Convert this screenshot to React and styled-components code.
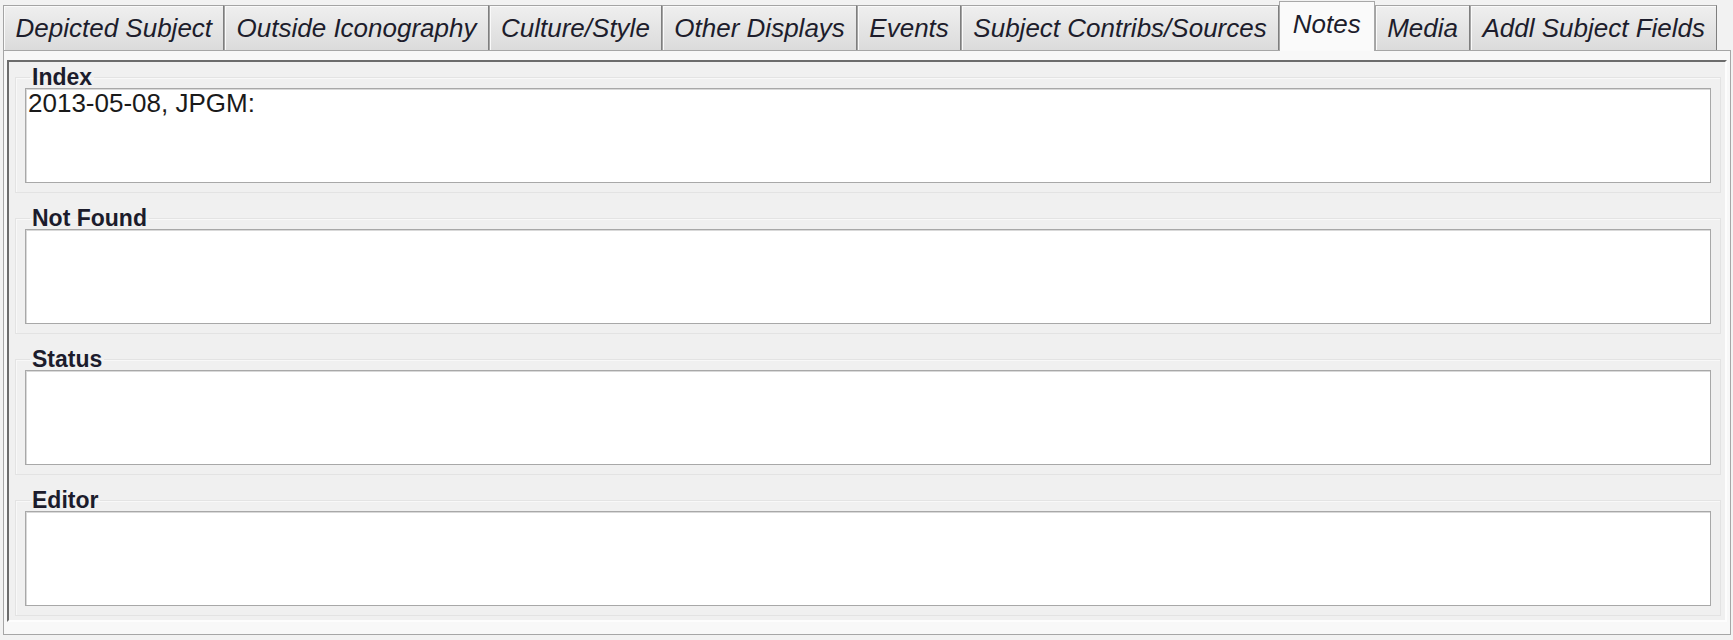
import React from 'react';
import styled, { createGlobalStyle } from 'styled-components';

const GlobalStyle = createGlobalStyle`
  html, body {
    margin: 0;
    padding: 0;
    background: #f2f2f2;
  }
  body {
    font-family: "Liberation Sans", Arial, sans-serif;
  }
`;

const tabs = [
  'Depicted Subject',
  'Outside Iconography',
  'Culture/Style',
  'Other Displays',
  'Events',
  'Subject Contribs/Sources',
  'Notes',
  'Media',
  'Addl Subject Fields',
];

const fields = [
  { label: 'Index', value: '2013-05-08, JPGM:' },
  { label: 'Not Found', value: '' },
  { label: 'Status', value: '' },
  { label: 'Editor', value: '' },
];

const App = () => {
  return (
    <>
      <GlobalStyle />
      <Window>
        <TabBar>
          {tabs.map((t) => (
            <Tab key={t} $active={t === 'Notes'}>{t}</Tab>
          ))}
        </TabBar>
        <Panel>
          <Inner>
            {fields.map((f) => (
              <Group key={f.label}>
                <Legend>{f.label}</Legend>
                <TextBox>{f.value}</TextBox>
              </Group>
            ))}
          </Inner>
        </Panel>
      </Window>
    </>
  );
};

const Window = styled.div`
  width: 1733px;
  box-sizing: border-box;
  padding: 0 2px 0 3px;
`;

const TabBar = styled.div`
  display: flex;
  align-items: flex-end;
  height: 50px;
`;

const Tab = styled.div`
  position: relative;
  box-sizing: border-box;
  font-size: 26px;
  font-style: italic;
  line-height: 44px;
  color: #1d1d2c;
  white-space: nowrap;
  border: 1px solid #a4a4a4;
  border-bottom: none;
  border-right-color: #7e7e7e;
  height: 45px;
  padding: 0 11px 0 11.5px;
  background: linear-gradient(#efefef, #dbdbdb);
  box-shadow: inset 1px 1px 0 #fafafa;

  ${(p) =>
    p.$active &&
    `
    z-index: 1;
    height: 50px;
    margin-bottom: -1px;
    padding: 0 13px 5px;
    background: #fafafa;
    border-color: #a8a8a8;
    box-shadow: none;
  `}
`;

const Panel = styled.div`
  border: 1px solid #a6a6a6;
  background: #f8f8f8;
  padding: 9px 3px 12px 3px;
`;

const Inner = styled.div`
  background: #f0f0f0;
  border-top: 2px solid #6c6c6c;
  border-left: 2px solid #6c6c6c;
  border-right: 2px solid #fdfdfd;
  border-bottom: 2px solid #fdfdfd;
  padding: 5px 0 4px;
  display: flex;
  flex-direction: column;
  gap: 15px;
`;

const Group = styled.fieldset`
  margin: 0 4px 0 6px;
  padding: 1px 9px 9px;
  border: 1px solid #e3e3e3;
  box-shadow: inset 1px 1px 0 #f8f8f8;
  min-width: 0;
`;

const Legend = styled.legend`
  font-size: 23px;
  font-weight: bold;
  line-height: 20px;
  color: #1c1c2c;
  padding: 0 2px;
  margin-left: 5px;
`;

const TextBox = styled.div`
  box-sizing: border-box;
  height: 95px;
  background: #fff;
  border: 1px solid #a8a8a8;
  box-shadow: inset 1px 1px 0 #d9d9d9;
  padding: 0 2px;
  font-size: 26px;
  line-height: 28px;
  color: #1a1a1a;
`;

export default App;
